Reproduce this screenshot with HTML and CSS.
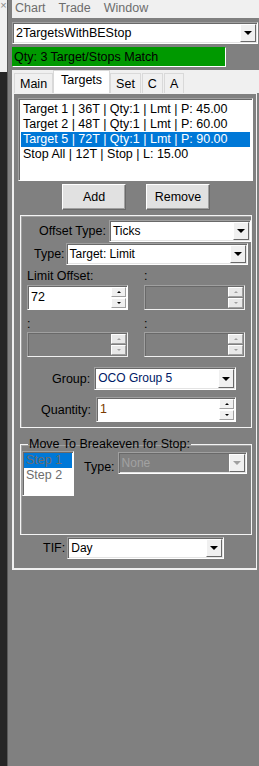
FILE: index.html
```html
<!DOCTYPE html>
<html lang="en">
<head>
  <meta charset="UTF-8">
  <title>ATM Strategy</title>
  <link rel="stylesheet" href="styles.css">
</head>
<body>

<div class="app">
  <div class="edge">
    <div class="edge-top"><span class="close">&times;</span></div>
  </div>

  <div class="main">
    <div class="menubar">
      <span>Chart</span>
      <span>Trade</span>
      <span>Window</span>
    </div>

    <div class="combo strategy">
      <div class="combo-text">2TargetsWithBEStop</div>
      <div class="combo-btn"><i class="tri"></i></div>
    </div>

    <div class="status">Qty: 3 Target/Stops Match</div>

    <div class="tabstrip">
      <div class="tab">Main</div>
      <div class="tab active">Targets</div>
      <div class="tab">Set</div>
      <div class="tab">C</div>
      <div class="tab">A</div>
    </div>

    <div class="tabpage">
      <ul class="listbox targets">
        <li>Target 1 | 36T | Qty:1 | Lmt | P: 45.00</li>
        <li>Target 2 | 48T | Qty:1 | Lmt | P: 60.00</li>
        <li class="sel">Target 5 | 72T | Qty:1 | Lmt | P: 90.00</li>
        <li>Stop All | 12T | Stop | L: 15.00</li>
      </ul>

      <div class="buttons">
        <button class="btn">Add</button>
        <button class="btn">Remove</button>
      </div>

      <div class="group target-group">
        <div class="row offset-row">
          <label class="lbl">Offset Type:</label>
          <div class="combo w-offset">
            <div class="combo-text">Ticks</div>
            <div class="combo-btn"><i class="tri"></i></div>
          </div>
        </div>
        <div class="row type-row">
          <label class="lbl">Type:</label>
          <div class="combo w-type">
            <div class="combo-text">Target: Limit</div>
            <div class="combo-btn"><i class="tri"></i></div>
          </div>
        </div>

        <div class="pair">
          <div class="field-col">
            <div class="cap">Limit Offset:</div>
            <div class="spin">
              <div class="spin-text">72</div>
              <div class="spin-btns"><b class="up"></b><b class="down"></b></div>
            </div>
          </div>
          <div class="field-col">
            <div class="cap">:</div>
            <div class="spin off">
              <div class="spin-text"></div>
              <div class="spin-btns"><b class="up"></b><b class="down"></b></div>
            </div>
          </div>
        </div>

        <div class="pair">
          <div class="field-col">
            <div class="cap">:</div>
            <div class="spin off">
              <div class="spin-text"></div>
              <div class="spin-btns"><b class="up"></b><b class="down"></b></div>
            </div>
          </div>
          <div class="field-col">
            <div class="cap">:</div>
            <div class="spin off">
              <div class="spin-text"></div>
              <div class="spin-btns"><b class="up"></b><b class="down"></b></div>
            </div>
          </div>
        </div>

        <div class="row group-row">
          <label class="lbl">Group:</label>
          <div class="combo w-group">
            <div class="combo-text navy">OCO Group 5</div>
            <div class="combo-btn"><i class="tri"></i></div>
          </div>
        </div>
        <div class="row qty-row">
          <label class="lbl">Quantity:</label>
          <div class="spin w-qty">
            <div class="spin-text brown">1</div>
            <div class="spin-btns"><b class="up"></b><b class="down"></b></div>
          </div>
        </div>
      </div>

      <fieldset class="group be-group">
        <legend>Move To Breakeven for Stop:</legend>
        <div class="be-body">
          <ul class="listbox steps">
            <li class="sel">Step 1</li>
            <li>Step 2</li>
          </ul>
          <label class="lbl be-type">Type:</label>
          <div class="combo off w-none">
            <div class="combo-text">None</div>
            <div class="combo-btn"><i class="tri"></i></div>
          </div>
        </div>
      </fieldset>

      <div class="row tif-row">
        <label class="lbl">TIF:</label>
        <div class="combo w-tif">
          <div class="combo-text">Day</div>
          <div class="combo-btn"><i class="tri"></i></div>
        </div>
      </div>
    </div>
  </div>
</div>

</body>
</html>
```

FILE: styles.css
```css
* {
  box-sizing: border-box;
}

html, body {
  margin: 0;
  height: 100%;
}

body {
  font-family: "Liberation Sans", Arial, sans-serif;
  font-size: 12px;
  color: #000;
  background: #808080;
}

.app {
  display: flex;
  height: 766px;
  overflow: hidden;
}

/* neighbouring window strip on the left */
.edge {
  width: 8px;
  flex: none;
  background: #262626;
  border-right: 1px solid #5a5a5a;
}

.edge-top {
  height: 72px;
  background: #f0f0f0;
  text-align: center;
}

.close {
  display: block;
  color: #8a8a8a;
  font-size: 11px;
  line-height: 11px;
}

.main {
  flex: 1;
  padding-left: 4px;
  background: #808080;
}

.menubar {
  height: 18px;
  background: #f0f0f0;
  color: #6d6d6d;
  display: flex;
  gap: 13px;
  padding-left: 3px;
  line-height: 17px;
  font-size: 12.5px;
}

/* ---------- combo box ---------- */
.combo {
  display: flex;
  height: 22px;
  background: #fff;
  border: 1px solid;
  border-color: #a0a0a0 #fff #fff #a0a0a0;
  box-shadow: inset 1px 1px 0 #696969, inset -1px -1px 0 #e3e3e3;
}

.combo-text {
  flex: 1;
  padding: 2px 0 0 3px;
  line-height: 16px;
  white-space: nowrap;
  overflow: hidden;
}

.combo-btn {
  width: 16px;
  margin: 1px 1px 1px 0;
  background: #f0f0f0;
  border: 1px solid;
  border-color: #fff #696969 #696969 #fff;
  display: flex;
  align-items: center;
  justify-content: center;
}

.tri {
  width: 0;
  height: 0;
  border-left: 4px solid transparent;
  border-right: 4px solid transparent;
  border-top: 4px solid #000;
}

.combo.off {
  background: #808080;
}

.combo.off .combo-text {
  color: #a2a2a2;
}

.combo.off .tri {
  border-top-color: #a0a0a0;
}

.strategy {
  margin-top: 4px;
  margin-right: 1px;
  font-size: 12.5px;
}

.status {
  margin-top: 3px;
  width: 214px;
  height: 20px;
  background: #009900;
  border: 1px solid;
  border-color: #009900 #fff #fff #009900;
  line-height: 18px;
  padding-left: 1px;
  font-size: 12.5px;
}

/* ---------- tabs ---------- */
.tabstrip {
  margin-top: 3px;
  height: 23px;
  background: #f0f0f0;
  display: flex;
  align-items: flex-end;
  padding-left: 2px;
}

.tab {
  height: 20px;
  padding: 0 5px;
  line-height: 20px;
  border: 1px solid #d9d9d9;
  border-bottom: none;
  background: #f0f0f0;
  margin-right: 1px;
  font-size: 12.5px;
}

.tab.active {
  height: 23px;
  line-height: 19px;
  padding: 0 7px;
  background: #fff;
  margin: 0 0 0 -1px;
}

.tabpage {
  width: 245px;
  height: 477px;
  background: #808080;
  border: 2px solid #f0f0f0;
  border-top: 1px solid #f0f0f0;
  border-right: 1px solid #f4f4f4;
  padding: 4px 3px 0 4px;
}

/* ---------- list boxes ---------- */
.listbox {
  list-style: none;
  margin: 0;
  padding: 2px;
  background: #fff;
  border: 1px solid;
  border-color: #a0a0a0 #fff #fff #a0a0a0;
  box-shadow: inset 1px 1px 0 #696969;
}

.listbox li {
  height: 15px;
  line-height: 15px;
  padding-left: 2px;
  white-space: nowrap;
  font-size: 12.5px;
}

.listbox li.sel {
  background: #0078d7;
  color: #fff;
}

.targets {
  width: 235px;
  height: 83px;
  padding-top: 3px;
}

.buttons {
  display: flex;
  gap: 20px;
  padding-left: 44px;
  margin-top: 3px;
}

.btn {
  width: 64px;
  height: 26px;
  font: inherit;
  font-size: 12.5px;
  background: #e1e1e1;
  border: 1px solid;
  border-color: #fff #696969 #696969 #fff;
  box-shadow: inset -1px -1px 0 #a0a0a0;
  padding: 0;
}

/* ---------- group boxes ---------- */
.group {
  margin: 0 0 0 2px;
  width: 232px;
  border: 1px solid #f4f4f4;
  box-shadow: inset 1px 1px 0 #a0a0a0;
}

.target-group {
  margin-top: 5px;
  height: 213px;
  padding: 4px 0 0 6px;
}

.row {
  display: flex;
  align-items: center;
}

.lbl {
  white-space: nowrap;
  font-size: 12.5px;
}

.offset-row .lbl {
  margin-left: 12px;
  margin-right: 3px;
}

.w-offset {
  width: 142px;
}

.type-row {
  margin-top: 1px;
}

.type-row .lbl {
  margin-left: 7px;
  margin-right: 1px;
}

.w-type {
  width: 182px;
}

.pair {
  display: flex;
  gap: 16px;
  margin-top: 4px;
}

.field-col {
  width: 101px;
}

.cap {
  height: 16px;
  line-height: 14px;
  font-size: 12.5px;
}

.pair + .pair {
  margin-top: 7px;
}

.pair + .pair .cap {
  height: 15px;
}

.spin {
  display: flex;
  height: 25px;
  background: #fff;
  border: 1px solid;
  border-color: #a0a0a0 #fff #fff #a0a0a0;
  box-shadow: inset 1px 1px 0 #696969;
}

.spin.off {
  background: #808080;
  border-color: #a0a0a0 #f0f0f0 #f0f0f0 #a0a0a0;
}

.spin-text {
  flex: 1;
  padding: 4px 0 0 3px;
  font-size: 12.5px;
}

.spin-btns {
  width: 15px;
  margin: 1px 1px 1px 0;
  display: flex;
  flex-direction: column;
  gap: 1px;
}

.spin-btns b {
  flex: 1;
  background: #f0f0f0;
  border: 1px solid;
  border-color: #fff #a0a0a0 #a0a0a0 #fff;
  display: flex;
  align-items: center;
  justify-content: center;
}

.spin-btns b::after {
  content: "";
  width: 0;
  height: 0;
  border-left: 2px solid transparent;
  border-right: 2px solid transparent;
}

.spin-btns .up::after {
  border-bottom: 2px solid #000;
}

.spin-btns .down::after {
  border-top: 2px solid #000;
}

.spin.off .spin-btns b {
  background: #e8e8e8;
}

.spin.off .spin-btns .up::after {
  border-bottom-color: #a0a0a0;
}

.spin.off .spin-btns .down::after {
  border-top-color: #a0a0a0;
}

.group-row {
  margin-top: 10px;
}

.group-row .lbl {
  margin-left: 25px;
  margin-right: 4px;
}

.w-group {
  width: 142px;
  height: 23px;
}

.qty-row {
  margin-top: 7px;
}

.qty-row .lbl {
  margin-left: 14px;
  margin-right: 5px;
}

.w-qty {
  width: 140px;
}

.navy {
  color: #001a66;
}

.brown {
  color: #7a3a00;
}

.be-group {
  margin-top: 10px;
  height: 97px;
  padding: 0 0 0 1px;
}

.be-group legend {
  padding: 0 1px;
  margin-left: 6px;
  font-size: 12.5px;
  line-height: 12px;
}

.be-body {
  display: flex;
  align-items: flex-start;
  margin-top: 1px;
}

.steps {
  width: 52px;
  height: 45px;
  padding: 1px;
}

.steps li,
.steps li.sel {
  color: #6d6d6d;
}

.be-type {
  margin: 9px 3px 0 10px;
}

.w-none {
  width: 129px;
  margin-top: 1px;
}

.tif-row {
  margin-top: 2px;
}

.tif-row .lbl {
  margin-left: 25px;
  margin-right: 2px;
}

.w-tif {
  width: 157px;
}
```
